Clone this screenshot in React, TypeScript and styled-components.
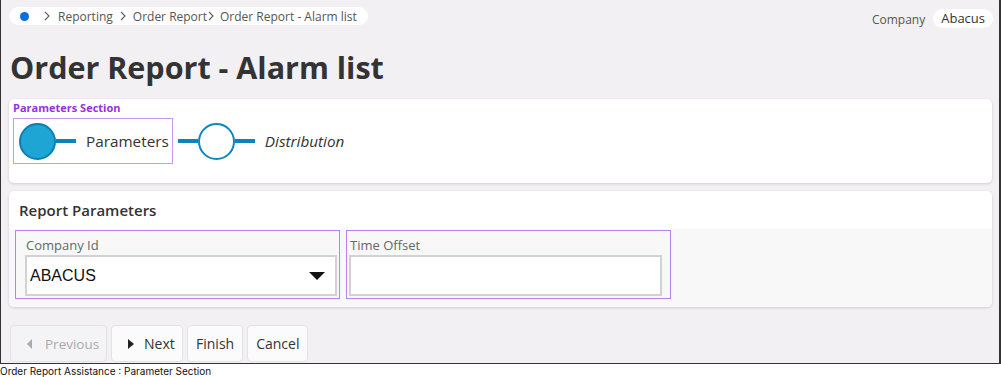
import React from 'react'
import styled, { createGlobalStyle } from 'styled-components'

const GlobalStyle = createGlobalStyle`
	html, body {
		margin: 0;
		padding: 0;
		background: #fff;
	}
	body {
		font-family: "Open Sans", "Liberation Sans", sans-serif;
	}
`

const Frame = styled.div`
	box-sizing: border-box;
	width: 1001px;
	height: 364px;
	background: #f2f0f3;
	border-left: 1px solid #333;
	border-right: 2px solid #333;
	border-bottom: 1px solid #333;
	padding: 7px 8px 0 8px;
	display: flex;
	flex-direction: column;
`

const TopBar = styled.div`
	display: flex;
	justify-content: space-between;
	align-items: flex-start;
	height: 21px;
`

const Crumbs = styled.div`
	display: flex;
	align-items: center;
	height: 18px;
	padding: 0 11px 0 11px;
	background: #fff;
	border-radius: 9px;
	font-size: 12px;
	color: #555;
`

const HomeDot = styled.span`
	width: 9px;
	height: 9px;
	border-radius: 50%;
	background: #0a6fd8;
	margin-right: 14px;
`

const Crumb = styled.span<{ $gap?: number }>`
	display: flex;
	align-items: center;
	white-space: nowrap;
	margin-left: ${p => p.$gap ?? 0}px;
`

const Chevron = styled.svg<{ $after?: number }>`
	width: 8px;
	height: 10px;
	margin: 0 ${p => p.$after ?? 8}px 0 0;
`

const CompanyArea = styled.div`
	display: flex;
	align-items: center;
	gap: 8px;
	margin-top: 2px;
	margin-right: -2px;
`

const CompanyLabel = styled.span`
	font-size: 12px;
	color: #555;
	margin-top: 2px;
`

const CompanyPill = styled.span`
	background: #fff;
	border-radius: 10px;
	padding: 0 8px;
	height: 19px;
	line-height: 19px;
	font-size: 13px;
	color: #333;
`

const Heading = styled.h1`
	margin: 19px 0 0 1px;
	font-size: 30.5px;
	line-height: 40px;
	font-weight: 700;
	color: #333;
`

const Card = styled.div`
	background: #fff;
	border-radius: 5px;
	box-shadow: 0 1px 3px rgba(0, 0, 0, 0.15);
	width: 983px;
	overflow: hidden;
`

const StepsCard = styled(Card)`
	margin-top: 12px;
	height: 84px;
	padding: 2px 4px 0;
	box-sizing: border-box;
`

const SectionTag = styled.div`
	font-size: 11px;
	font-weight: 700;
	color: #9333e0;
	line-height: 13px;
	margin-bottom: 4px;
`

const Steps = styled.div`
	display: flex;
	align-items: center;
`

const Highlight = styled.div`
	display: flex;
	align-items: center;
	height: 46px;
	box-sizing: border-box;
	border: 1px solid #c49af2;
	padding: 0 3px 0 5px;
	margin-right: 5px;
`

const Circle = styled.span<{ $filled?: boolean }>`
	box-sizing: border-box;
	width: 37px;
	height: 37px;
	border-radius: 50%;
	border: 2px solid ${p => (p.$filled ? '#0b7fb4' : '#0b87c2')};
	background: ${p => (p.$filled ? '#1fa5d3' : '#fff')};
	flex-shrink: 0;
`

const Connector = styled.span`
	width: 20px;
	height: 4px;
	background: #0b84bd;
	flex-shrink: 0;
`

const StepName = styled.span<{ $current?: boolean }>`
	margin-left: 10px;
	font-size: 15.3px;
	color: #333;
	font-weight: ${p => (p.$current ? 500 : 400)};
	font-style: ${p => (p.$current ? 'normal' : 'italic')};
`

const ParamsCard = styled(Card)`
	margin-top: 8px;
	height: 116px;
`

const CardHeader = styled.div`
	height: 38px;
	display: flex;
	align-items: center;
	padding-left: 10px;
	font-size: 15px;
	font-weight: 600;
	color: #333;
`

const CardBody = styled.div`
	background: #f8f8f8;
	height: 78px;
	padding: 1px 6px 0;
	display: flex;
	gap: 6px;
`

const Field = styled.div<{ $pad: 'left' | 'right' }>`
	box-sizing: border-box;
	width: 325px;
	height: 69px;
	border: 1px solid #b583f2;
	padding: ${p => (p.$pad === 'left' ? '0 2px 0 9px' : '0 8px 0 2px')};
`

const FieldLabel = styled.div`
	font-size: 13px;
	color: #666;
	height: 24px;
	line-height: 28px;
	padding-left: 1px;
`

const InputBox = styled.div`
	box-sizing: border-box;
	height: 41px;
	border: 2px solid #d2d2d2;
	background: #fff;
	display: flex;
	align-items: center;
	justify-content: space-between;
	padding: 0 10px 0 3px;
	font-family: "Liberation Sans", Arial, sans-serif;
	font-size: 16px;
	color: #111;
`

const Caret = styled.span`
	width: 0;
	height: 0;
	border-left: 8px solid transparent;
	border-right: 8px solid transparent;
	border-top: 8px solid #111;
	margin-top: 1px;
`

const Buttons = styled.div`
	display: flex;
	gap: 4px;
	margin-top: 18px;
	margin-left: 1px;
`

const Button = styled.button<{ $disabled?: boolean; $w?: number; $lead?: number }>`
	height: 37px;
	box-sizing: border-box;
	border: 1px solid #e4e2e6;
	border-radius: 4px;
	background: ${p => (p.$disabled ? '#f4f3f5' : '#fbfbfb')};
	color: ${p => (p.$disabled ? '#aaa' : '#333')};
	font-family: "Open Sans", "Liberation Sans", sans-serif;
	font-size: ${p => (p.$disabled ? 13.5 : 14)}px;
	padding: 0 8px 0 ${p => p.$lead ?? 8}px;
	${p => (p.$w ? `width: ${p.$w}px;` : '')}
	display: flex;
	align-items: center;
	gap: ${p => (p.$disabled ? 13 : 10)}px;
`

const Arrow = styled.span<{ $left?: boolean }>`
	width: 0;
	height: 0;
	border-top: 5px solid transparent;
	border-bottom: 5px solid transparent;
	${p => (p.$left ? 'border-right: 5px solid #aaa;' : 'border-left: 6px solid #222;')}
`

const Caption = styled.div`
	font-family: Inter, "Liberation Sans", sans-serif;
	font-size: 10px;
	color: #111;
	line-height: 14px;
`

const ChevronIcon = ({ after }: { after?: number }) => (
	<Chevron viewBox="0 0 8 10" $after={after}>
		<path d="M2 1 L6 5 L2 9" fill="none" stroke="#666" strokeWidth="1.2" />
	</Chevron>
)

export default function App() {
	return (
		<>
			<GlobalStyle />
			<Frame>
				<TopBar>
					<Crumbs>
						<HomeDot />
						<ChevronIcon after={7} />
						<Crumb>Reporting</Crumb>
						<Crumb $gap={6}><ChevronIcon after={6} /></Crumb>
						<Crumb>Order Report</Crumb>
						<Crumb $gap={0}><ChevronIcon after={5} /></Crumb>
						<Crumb>Order Report - Alarm list</Crumb>
					</Crumbs>
					<CompanyArea>
						<CompanyLabel>Company</CompanyLabel>
						<CompanyPill>Abacus</CompanyPill>
					</CompanyArea>
				</TopBar>
				<Heading>Order Report - Alarm list</Heading>
				<StepsCard>
					<SectionTag>Parameters Section</SectionTag>
					<Steps>
						<Highlight>
							<Circle $filled />
							<Connector />
							<StepName $current>Parameters</StepName>
						</Highlight>
						<Connector />
						<Circle />
						<Connector />
						<StepName>Distribution</StepName>
					</Steps>
				</StepsCard>
				<ParamsCard>
					<CardHeader>Report Parameters</CardHeader>
					<CardBody>
						<Field $pad="left">
							<FieldLabel>Company Id</FieldLabel>
							<InputBox>
								ABACUS
								<Caret />
							</InputBox>
						</Field>
						<Field $pad="right">
							<FieldLabel>Time Offset</FieldLabel>
							<InputBox />
						</Field>
					</CardBody>
				</ParamsCard>
				<Buttons>
					<Button $disabled $w={97} $lead={16}>
						<Arrow $left />
						Previous
					</Button>
					<Button $w={72} $lead={16}>
						<Arrow />
						Next
					</Button>
					<Button>Finish</Button>
					<Button>Cancel</Button>
				</Buttons>
			</Frame>
			<Caption>Order Report Assistance : Parameter Section</Caption>
		</>
	)
}
